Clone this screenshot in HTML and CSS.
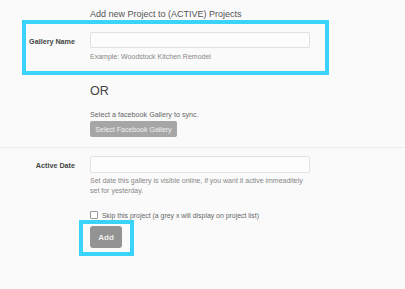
FILE: index.html
```html
<!DOCTYPE html>
<html>
<head>
<meta charset="utf-8">
<link rel="stylesheet" href="styles.css">
</head>
<body>
<div class="page">
  <div class="title">Add new Project to (ACTIVE) Projects</div>
  <div class="highlight name-box">
    <div class="row">
      <label class="label">Gallery Name</label>
      <div class="field">
        <input class="input" type="text">
        <div class="hint">Example: Woodstock Kitchen Remodel</div>
      </div>
    </div>
  </div>
  <div class="or">OR</div>
  <div class="fb">
    <div class="fb-text">Select a facebook Gallery to sync.</div>
    <button class="btn fb-btn">Select Facebook Gallery</button>
  </div>
  <div class="divider"></div>
  <div class="row date-row">
    <label class="label">Active Date</label>
    <div class="field">
      <input class="input" type="text">
      <div class="hint help">Set date this gallery is visible online, if you want it active immeaditely set for yesterday.</div>
      <div class="check">
        <span class="box"></span>
        <span>Skip this project (a grey x will display on project list)</span>
      </div>
    </div>
  </div>
  <div class="highlight add-box">
    <button class="btn add-btn">Add</button>
  </div>
</div>
</body>
</html>
```
FILE: styles.css
```css
html, body {
  margin: 0;
  padding: 0;
  background: #fafafa;
}
body {
  font-family: "Liberation Sans", Arial, sans-serif;
  color: #555;
  width: 405px;
  height: 289px;
  overflow: hidden;
}
.page {
  display: flex;
  flex-direction: column;
}
.title {
  margin: 8px 0 0 90px;
  font-size: 9px;
  line-height: 12px;
  color: #555;
}
.highlight {
  border: 4px solid #3ad4fb;
}
.name-box {
  margin-left: 22px;
  width: 299px;
  padding-top: 8px;
  box-sizing: content-box;
  height: 39px;
}
.row {
  display: flex;
  align-items: flex-start;
}
.label {
  width: 49px;
  flex: none;
  text-align: right;
  font-size: 7.2px;
  font-weight: bold;
  color: #444;
  padding-top: 5px;
  margin-right: 15px;
}
.field {
  display: flex;
  flex-direction: column;
  width: 220px;
}
.input {
  box-sizing: border-box;
  width: 220px;
  height: 16px;
  margin: 0;
  border: 1px solid #e2e2e2;
  border-radius: 2px;
  background: #fdfdfd;
  padding: 0;
}
.hint {
  font-size: 7px;
  color: #888;
  margin-top: 4px;
  line-height: 9.5px;
}
.or {
  margin: 8px 0 0 90px;
  font-size: 12.5px;
  line-height: 16px;
  color: #444;
}
.fb {
  margin: 11px 0 0 90px;
  display: flex;
  flex-direction: column;
  align-items: flex-start;
}
.fb-text {
  font-size: 7.2px;
  color: #666;
  line-height: 9px;
}
.btn {
  font-family: "Liberation Sans", Arial, sans-serif;
  border: none;
  color: #f0f0f0;
  margin: 0;
  padding: 0;
}
.fb-btn {
  margin-top: 2px;
  width: 87px;
  height: 16px;
  background: #a6a6a6;
  border-radius: 2px;
  font-size: 7px;
}
.divider {
  margin-top: 10px;
  height: 1px;
  background: #ececec;
}
.date-row {
  margin: 8px 0 0 26px;
}
.date-row .input {
  height: 17px;
}
.help {
  margin-top: 3px;
  width: 215px;
}
.check {
  display: flex;
  align-items: center;
  margin-top: 16px;
  font-size: 6.9px;
  color: #666;
}
.box {
  width: 6px;
  height: 6px;
  border: 1px solid #999;
  border-radius: 1px;
  background: #fff;
  margin-right: 4px;
}
.add-box {
  margin: 1px 0 0 79px;
  width: 40px;
  padding: 2px 0 4px 7px;
  box-sizing: content-box;
}
.add-btn {
  display: block;
  width: 32px;
  height: 22px;
  background: #939393;
  border-radius: 3px;
  font-size: 8px;
  font-weight: bold;
  color: #eee;
}
```
